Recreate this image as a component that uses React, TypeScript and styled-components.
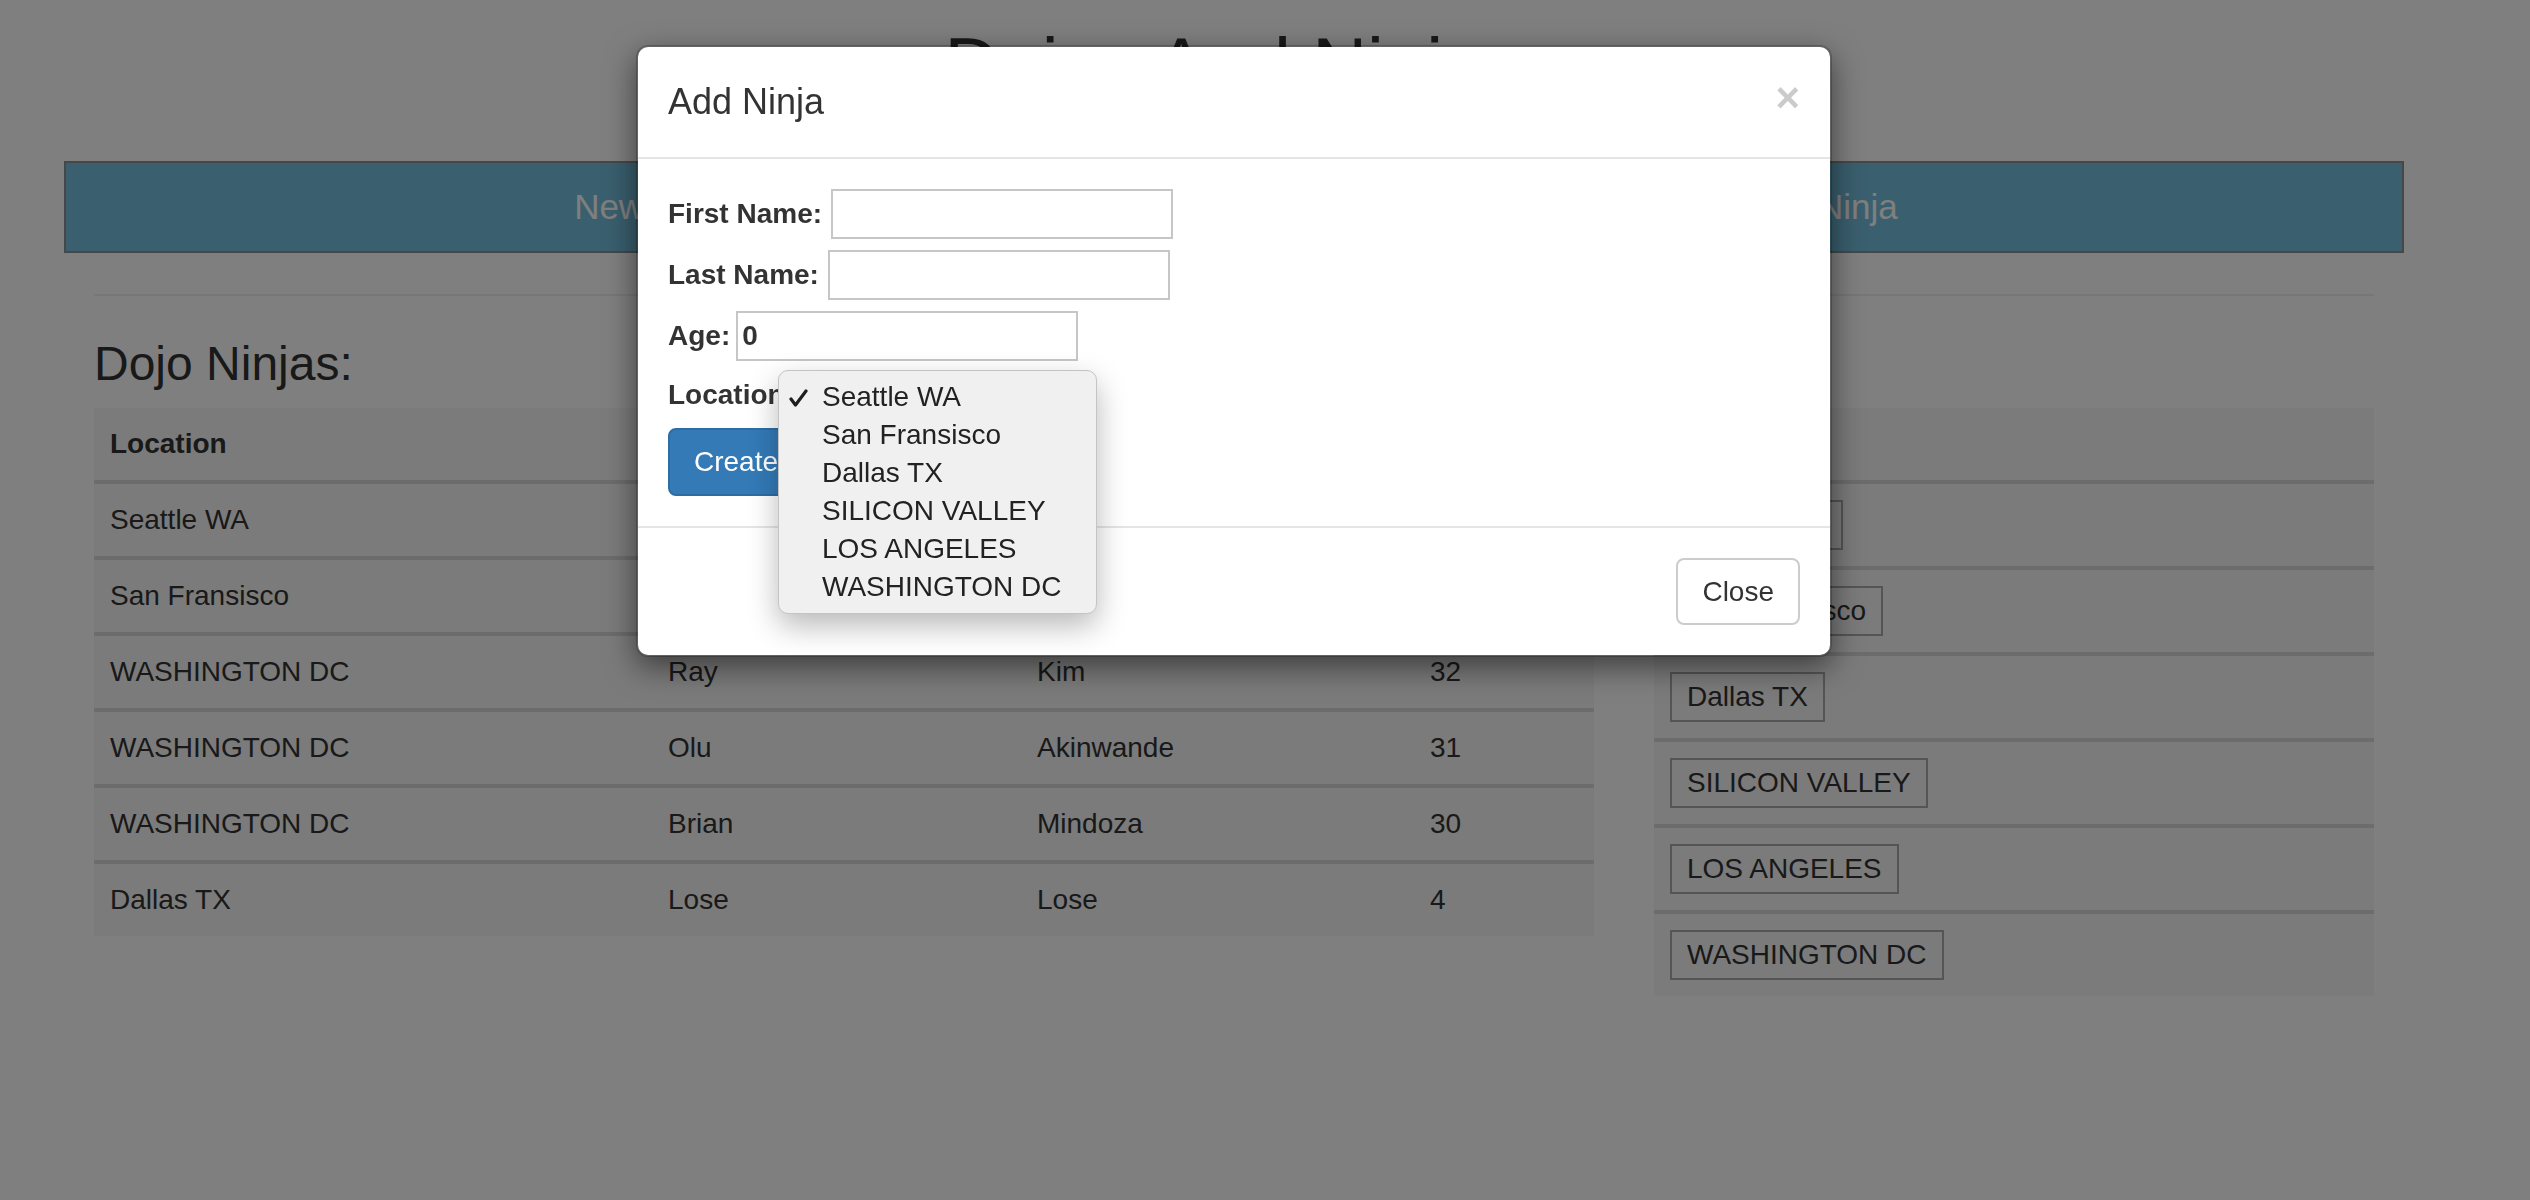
import React from "react";
import styled, { createGlobalStyle } from "styled-components";

const GlobalStyle = createGlobalStyle`
  html, body { margin: 0; padding: 0; background: #fff; }
  body {
    font-family: "Liberation Sans", Arial, Helvetica, sans-serif;
    color: #333;
    font-size: 28px;
  }
  *, *::before, *::after { box-sizing: border-box; }
`;

const Viewport = styled.div`
  width: 2468px;
  min-height: 1200px;
`;

const Container = styled.div`
  width: 2340px;
  margin: 0 auto;
  padding: 0 30px;
`;

const PageTitle = styled.h1`
  margin: 23px 0 0;
  font-size: 76px;
  line-height: 84px;
  font-weight: 500;
  text-align: center;
  color: #333;
`;

const NavBar = styled.nav`
  display: flex;
  margin: 54px -30px 0;
  height: 92px;
  background: #74bedc;
  border: 2px solid #8e8e8e;
`;

const NavItem = styled.a`
  flex: 1;
  display: flex;
  align-items: center;
  justify-content: center;
  font-size: 35px;
  color: #fff;
  text-decoration: none;
`;

const Rule = styled.hr`
  margin: 41px 0 0;
  border: 0;
  border-top: 2px solid #eee;
`;

const Columns = styled.div`
  display: grid;
  grid-template-columns: 1500px 720px;
  column-gap: 60px;
`;

const SectionTitle = styled.h3`
  margin: 41px 0 18px;
  font-size: 48px;
  line-height: 53px;
  font-weight: 500;
  color: #333;
`;

const Table = styled.table`
  width: 100%;
  table-layout: fixed;
  border-collapse: separate;
  border-spacing: 0;
  background: #f6f6f6;
  font-size: 28px;
  tbody tr:first-child > td {
    border-top: none;
  }
`;

const Col = styled.col<{ $w: number }>`
  width: ${(p) => p.$w}px;
`;

const Th = styled.th`
  text-align: left;
  font-weight: 700;
  padding: 16px;
  line-height: 40px;
  border-bottom: 4px solid #d8d8d8;
`;

const Td = styled.td`
  padding: 16px;
  line-height: 40px;
  border-top: 4px solid #d8d8d8;
  vertical-align: middle;
`;

const DojoTag = styled.span`
  display: block;
  width: fit-content;
  border: 2px solid #ababab;
  padding: 5px 15px;
  line-height: 36px;
  font-size: 28px;
  color: #333;
`;

const Backdrop = styled.div`
  position: fixed;
  inset: 0;
  background: rgba(0, 0, 0, 0.5);
`;

const ModalLayer = styled.div`
  position: fixed;
  top: 0;
  left: 0;
  width: 2468px;
  height: 100%;
`;

const Dialog = styled.div`
  width: 1196px;
  margin: 45px auto 0;
  background: #fff;
  background-clip: padding-box;
  border: 2px solid rgba(0, 0, 0, 0.2);
  border-radius: 12px;
  box-shadow: 0 10px 30px rgba(0, 0, 0, 0.5);
`;

const ModalHeader = styled.div`
  display: flex;
  justify-content: space-between;
  align-items: flex-start;
  padding: 30px;
  border-bottom: 2px solid #e5e5e5;
`;

const ModalTitle = styled.h4`
  margin: 0;
  font-size: 36px;
  line-height: 50px;
  font-weight: 500;
  color: #333;
`;

const CloseX = styled.button`
  border: 0;
  background: none;
  padding: 0;
  margin-top: 0;
  font: 700 42px/1 "Liberation Sans", Arial, sans-serif;
  color: #000;
  opacity: 0.2;
  cursor: pointer;
`;

const ModalBody = styled.div`
  display: flex;
  flex-direction: column;
  align-items: flex-start;
  gap: 11px;
  padding: 30px;
`;

const Field = styled.label<{ $h?: number; $gap?: number }>`
  position: relative;
  display: flex;
  align-items: center;
  gap: ${(p) => p.$gap ?? 9}px;
  height: ${(p) => p.$h ?? 50}px;
  font-size: 28px;
  font-weight: 700;
  color: #333;
`;

const TextInput = styled.input`
  width: 342px;
  height: 50px;
  padding: 0 4px;
  border: 2px solid #c6c6c6;
  background: #fff;
  font: inherit;
  color: #333;
  outline: none;
`;

const NativeSelect = styled.select`
  height: 38px;
  font: 400 26px "Liberation Sans", Arial, sans-serif;
  color: #222;
`;

const SelectMenu = styled.div`
  position: absolute;
  left: 110px;
  top: -2px;
  width: 319px;
  padding: 7px 0;
  background: #f0f0f0;
  border: 1px solid #c4c4c4;
  border-radius: 10px;
  box-shadow: 0 12px 30px rgba(0, 0, 0, 0.28);
  z-index: 2;
`;

const MenuItem = styled.div`
  display: grid;
  grid-template-columns: 43px 1fr;
  align-items: center;
  height: 38px;
  font-size: 28px;
  font-weight: 400;
  line-height: 38px;
  color: #222;
`;

const CheckMark = styled.svg`
  display: block;
  margin-left: 10px;
  margin-top: 1px;
`;

const PrimaryButton = styled.button`
  height: 68px;
  padding: 0 24px;
  font: 400 28px "Liberation Sans", Arial, sans-serif;
  color: #fff;
  background: #337ab7;
  border: 2px solid #2e6da4;
  border-radius: 8px;
`;

const ModalFooter = styled.div`
  display: flex;
  justify-content: flex-end;
  padding: 30px;
  border-top: 2px solid #e5e5e5;
`;

const DefaultButton = styled.button`
  height: 67px;
  padding: 0 24px;
  font: 400 28px "Liberation Sans", Arial, sans-serif;
  color: #333;
  background: #fff;
  border: 2px solid #ccc;
  border-radius: 8px;
`;

const ninjas = [
  ["Seattle WA", "", "", ""],
  ["San Fransisco", "", "", ""],
  ["WASHINGTON DC", "Ray", "Kim", "32"],
  ["WASHINGTON DC", "Olu", "Akinwande", "31"],
  ["WASHINGTON DC", "Brian", "Mindoza", "30"],
  ["Dallas TX", "Lose", "Lose", "4"],
];

const dojos = [
  "Seattle WA",
  "San Fransisco",
  "Dallas TX",
  "SILICON VALLEY",
  "LOS ANGELES",
  "WASHINGTON DC",
];

export default function App() {
  return (
    <>
      <GlobalStyle />
      <Viewport>
        <Container>
          <PageTitle>Dojos And Ninjas</PageTitle>
          <NavBar>
            <NavItem href="#">New Dojo</NavItem>
            <NavItem href="#">New Ninja</NavItem>
          </NavBar>
          <Rule />
          <Columns>
            <section>
              <SectionTitle>Dojo Ninjas:</SectionTitle>
              <Table>
                <colgroup>
                  <Col $w={558} />
                  <Col $w={369} />
                  <Col $w={393} />
                  <Col $w={180} />
                </colgroup>
                <thead>
                  <tr>
                    <Th>Location</Th>
                    <Th>First Name</Th>
                    <Th>Last Name</Th>
                    <Th>Age</Th>
                  </tr>
                </thead>
                <tbody>
                  {ninjas.map((r, i) => (
                    <tr key={i}>
                      {r.map((c, j) => (
                        <Td key={j}>{c}</Td>
                      ))}
                    </tr>
                  ))}
                </tbody>
              </Table>
            </section>
            <section>
              <SectionTitle>Dojos:</SectionTitle>
              <Table>
                <thead>
                  <tr>
                    <Th>Location</Th>
                  </tr>
                </thead>
                <tbody>
                  {dojos.map((d) => (
                    <tr key={d}>
                      <Td>
                        <DojoTag>{d}</DojoTag>
                      </Td>
                    </tr>
                  ))}
                </tbody>
              </Table>
            </section>
          </Columns>
        </Container>
      </Viewport>
      <Backdrop />
      <ModalLayer>
        <Dialog>
          <ModalHeader>
            <ModalTitle>Add Ninja</ModalTitle>
            <CloseX type="button">×</CloseX>
          </ModalHeader>
          <ModalBody>
            <Field>
              First Name:
              <TextInput type="text" />
            </Field>
            <Field>
              Last Name:
              <TextInput type="text" />
            </Field>
            <Field $gap={6}>
              Age:
              <TextInput type="text" defaultValue="0" />
            </Field>
            <Field $h={45}>
              Location:
              <NativeSelect defaultValue="Seattle WA">
                {dojos.map((d) => (
                  <option key={d}>{d}</option>
                ))}
              </NativeSelect>
              <SelectMenu>
                {dojos.map((d, i) => (
                  <MenuItem key={d}>
                    <span>
                      {i === 0 && (
                        <CheckMark width="19" height="18" viewBox="0 0 19 18">
                          <path
                            d="M2 10 L6.5 16 L17 2"
                            fill="none"
                            stroke="#1e1e1e"
                            strokeWidth="3.2"
                            strokeLinecap="round"
                            strokeLinejoin="round"
                          />
                        </CheckMark>
                      )}
                    </span>
                    <span>{d}</span>
                  </MenuItem>
                ))}
              </SelectMenu>
            </Field>
            <PrimaryButton type="button">Create</PrimaryButton>
          </ModalBody>
          <ModalFooter>
            <DefaultButton type="button">Close</DefaultButton>
          </ModalFooter>
        </Dialog>
      </ModalLayer>
    </>
  );
}
